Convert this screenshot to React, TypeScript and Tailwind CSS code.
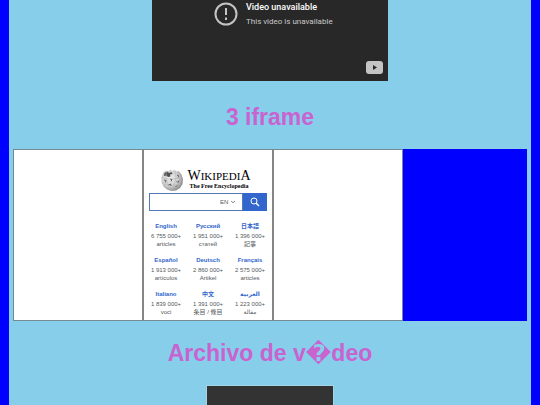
import React from "react";

type Language = { name: string; count: string; unit: string; dir?: "rtl" };

const languages: Language[] = [
  { name: "English", count: "6 755 000+", unit: "articles" },
  { name: "Русский", count: "1 951 000+", unit: "статей" },
  { name: "日本語", count: "1 396 000+", unit: "記事" },
  { name: "Español", count: "1 913 000+", unit: "artículos" },
  { name: "Deutsch", count: "2 860 000+", unit: "Artikel" },
  { name: "Français", count: "2 575 000+", unit: "articles" },
  { name: "Italiano", count: "1 839 000+", unit: "voci" },
  { name: "中文", count: "1 391 000+", unit: "条目 / 條目" },
  { name: "العربية", count: "1 223 000+", unit: "مقالة", dir: "rtl" },
];

function Globe() {
  return (
    <svg viewBox="0 0 48 48" className="size-6 shrink-0" aria-hidden="true">
      <defs>
        <radialGradient id="ball" cx="0.4" cy="0.4" r="0.65">
          <stop offset="0" stopColor="#eeeeee" />
          <stop offset="0.6" stopColor="#cccccc" />
          <stop offset="1" stopColor="#858585" />
        </radialGradient>
      </defs>
      <path d="M7 8l6-3 3 2 5-4 3 3 4-2 5 3 4-1 6 7 3 9-1 10-5 8-8 5-9 1-9-3-7-6-4-9 0-10z" fill="url(#ball)" />
      <path d="M9 10l6-3 3 3 5-2 2 4-5 1 1 4-5 1-3-3-5 1z" fill="#505050" />
      <path d="M14 6q-5 12 1 25t12 14M30 5q4 13 0 23t-6 18M3 19q14 6 41 1M5 31q16 6 37 1" fill="none" stroke="#b0b0b0" strokeWidth="1" />
      <path d="M8 24l4 1-1 4M20 22l4 1-2 4M34 14l4 2-2 3M17 34l4-2 1 4M33 26l3 3 2-4M31 38l3-3" fill="none" stroke="#666" strokeWidth="2" />
    </svg>
  );
}

function Wikipedia() {
  return (
    <div className="h-full px-[5px] pt-[18px] font-['Liberation_Sans','Noto_Sans_CJK_JP','DejaVu_Sans',sans-serif]">
      <div className="flex items-center justify-center gap-[3px] pr-[5px] font-['Liberation_Serif',serif] text-black">
        <Globe />
        <div className="text-center whitespace-nowrap">
          <div className="text-[14px] leading-[12px]">
            W<span className="text-[11px]">IKIPEDI</span>A
          </div>
          <div className="text-[6px] leading-[8px] font-bold">The Free Encyclopedia</div>
        </div>
      </div>
      <form className="mt-px flex h-[18px]" onSubmit={(e) => e.preventDefault()}>
        <div className="relative flex min-w-0 flex-1 border border-[#5278b8] bg-white">
          <input aria-label="Search Wikipedia" className="min-w-0 flex-1 px-1 text-[6px] outline-none" />
          <select aria-label="Language" className="w-[22px] appearance-none bg-transparent text-[6px] text-[#54595d]">
            <option>EN</option>
          </select>
          <svg viewBox="0 0 10 10" className="pointer-events-none absolute top-[6px] right-[7px] size-1" aria-hidden="true">
            <path d="M0 2l5 5 5-5" fill="none" stroke="#54595d" strokeWidth="2" />
          </svg>
        </div>
        <button aria-label="Search" className="flex w-6 items-center justify-center bg-[#3366cc]">
          <svg viewBox="0 0 20 20" className="size-[10px]" aria-hidden="true">
            <circle cx="8" cy="8" r="6" fill="none" stroke="white" strokeWidth="2" />
            <path d="M12 12l6 6" stroke="white" strokeWidth="3" />
          </svg>
        </button>
      </form>
      <div className="-mx-1 mt-[11px] grid grid-cols-3 gap-y-[9px] text-center whitespace-nowrap">
        {languages.map((l) => (
          <a key={l.name} href="#" className="text-[6px] text-[#54595d]">
            <strong dir={l.dir} className="block h-[9px] leading-[9px] text-[#3366cc]">{l.name}</strong>
            <span className="block h-2 leading-[10px]">{l.count}</span>
            <span dir={l.dir} className="block h-2 leading-[10px]">{l.unit}</span>
          </a>
        ))}
      </div>
    </div>
  );
}

export default function App() {
  return (
    <div className="h-screen overflow-hidden bg-[#0000ff] px-[9px] font-['Liberation_Sans','DejaVu_Sans',sans-serif]">
      <main className="flex min-h-screen flex-col items-center bg-[#87ceeb] px-1">
        <section className="relative flex h-[81px] w-[236px] gap-2 bg-[#282828] pt-px pl-[62px] font-['Roboto',sans-serif]">
          <svg viewBox="0 0 24 24" className="mt-px size-6 shrink-0" aria-hidden="true">
            <circle cx="12" cy="12" r="10.5" fill="none" stroke="#c4c4c4" strokeWidth="2" />
            <path d="M12 6v7M12 15.5v2.5" stroke="#c4c4c4" strokeWidth="2" />
          </svg>
          <div className="whitespace-nowrap">
            <p className="text-[9px] leading-[12px] font-medium text-white">Video unavailable</p>
            <p className="mt-[3px] text-[8px] leading-[12px] text-[#c8c8c8]">This video is unavailable</p>
          </div>
          <button aria-label="Watch on YouTube" className="absolute right-[5px] bottom-[7px]">
            <svg viewBox="0 0 17 13" className="h-[13px] w-[17px]" aria-hidden="true">
              <rect width="17" height="13" rx="3" fill="#c4c4c4" />
              <path d="M7 4v5l4-2.500z" fill="#282828" />
            </svg>
          </button>
        </section>
        <h2 className="mt-[23px] text-[23px] leading-[26px] font-bold text-[#c863cf]">3 iframe</h2>
        <section className="mt-[19px] grid h-[172px] w-full grid-cols-[130fr_130fr_130fr_124fr]">
          <div className="border border-[#748b94] border-r-[#858585] bg-white" />
          <div className="min-w-0 border border-[#748b94] border-x-[#858585] bg-white">
            <Wikipedia />
          </div>
          <div className="border border-[#748b94] border-l-[#858585] bg-white" />
          <div className="bg-[#0000ff]" />
        </section>
        <h2 className="mt-[19px] text-[23px] leading-[26px] font-bold text-[#c863cf]">Archivo de v�deo</h2>
        <section className="mt-[19px] w-[128px] flex-1 border border-b-0 border-[#a5d5e5] bg-[#333333]" />
      </main>
    </div>
  );
}
